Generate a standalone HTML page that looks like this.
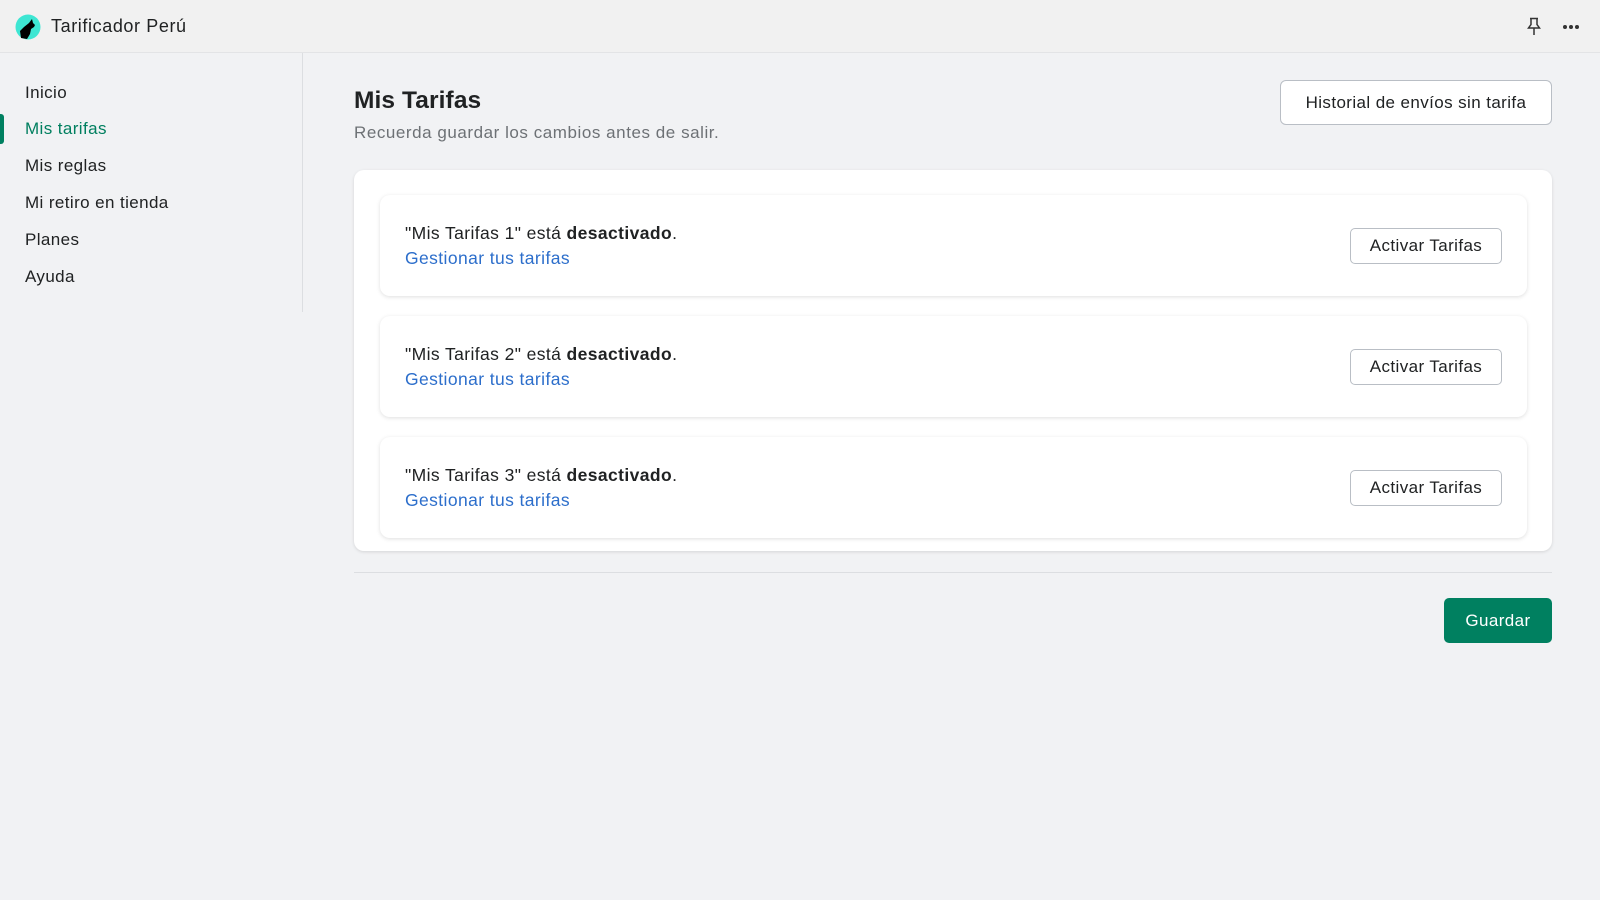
<!DOCTYPE html>
<html><head><meta charset="utf-8"><style>
*{box-sizing:border-box;margin:0;padding:0}
body{width:1600px;height:900px;background:#f1f2f4;font-family:"Liberation Sans",sans-serif;color:#202223;position:relative;overflow:hidden;letter-spacing:.4px}
.abs{position:absolute}
.hdr{left:0;top:0;width:1600px;height:53px;border-bottom:1px solid #e3e4e6;background:#f1f1f1}
.nav{font-size:17px;left:25px}
.btn{position:absolute;background:#fff;border:1.5px solid #b9bec5;border-radius:5px;font-size:17px;display:flex;align-items:center;justify-content:center;color:#202223}
.card{position:absolute;left:380px;width:1147px;height:101px;background:#fff;border-radius:10px;box-shadow:0 1px 4px rgba(0,0,0,.13)}
.l1{position:absolute;left:25px;top:28px;font-size:17.5px}
.l2{position:absolute;left:25px;top:53px;font-size:17.5px;color:#2c6ecb}
.dot{position:absolute;width:4px;height:4px;border-radius:2px;background:#333;top:25px}
</style></head><body>
<div class="abs hdr"></div>
<svg class="abs" style="left:15px;top:14px" width="26" height="26" viewBox="0 0 26 26"><circle cx="13" cy="13" r="12.5" fill="#3ee6d3"/><path d="M6 24 L5 17 L9 13 L14 9 L17 5 L18 9 L20 11 L19 13 L16 15 L15 20 L12 25 Z" fill="#000"/></svg>
<div class="abs" style="left:51px;top:16px;font-size:18px;letter-spacing:.6px">Tarificador Perú</div>
<svg class="abs" style="left:1526px;top:17px" width="16" height="20" viewBox="0 0 16 20" fill="none" stroke="#333" stroke-width="1.5"><path d="M4 1.5h8M5 1.5v6L2.5 11h11L11 7.5v-6M8 11v7"/></svg>
<div class="dot" style="left:1563px"></div><div class="dot" style="left:1569px"></div><div class="dot" style="left:1575px"></div>
<div class="abs" style="left:302px;top:53px;width:1px;height:259px;background:#dcdee1"></div>
<div class="abs" style="left:0;top:114px;width:4px;height:30px;background:#008060;border-radius:0 3px 3px 0"></div>
<div class="abs nav" style="top:83px">Inicio</div>
<div class="abs nav" style="top:119px;color:#007f5f">Mis tarifas</div>
<div class="abs nav" style="top:156px">Mis reglas</div>
<div class="abs nav" style="top:193px">Mi retiro en tienda</div>
<div class="abs nav" style="top:230px">Planes</div>
<div class="abs nav" style="top:267px">Ayuda</div>
<div class="abs" style="left:354px;top:87px;font-size:24.5px;font-weight:bold;letter-spacing:.1px">Mis Tarifas</div>
<div class="abs" style="left:354px;top:123px;font-size:17px;color:#6d7175;letter-spacing:.55px">Recuerda guardar los cambios antes de salir.</div>
<div class="btn" style="left:1280px;top:80px;width:272px;height:45px;border-radius:6px">Historial de envíos sin tarifa</div>
<div class="abs" style="left:354px;top:170px;width:1198px;height:381px;background:#fff;border-radius:10px;box-shadow:0 1px 3px rgba(0,0,0,.12)"></div>
<div class="card" style="top:195px"><div class="l1">"Mis Tarifas 1" está <b>desactivado</b>.</div><div class="l2">Gestionar tus tarifas</div></div>
<div class="card" style="top:316px"><div class="l1">"Mis Tarifas 2" está <b>desactivado</b>.</div><div class="l2">Gestionar tus tarifas</div></div>
<div class="card" style="top:437px"><div class="l1">"Mis Tarifas 3" está <b>desactivado</b>.</div><div class="l2">Gestionar tus tarifas</div></div>
<div class="btn" style="left:1350px;top:228px;width:152px;height:36px">Activar Tarifas</div>
<div class="btn" style="left:1350px;top:349px;width:152px;height:36px">Activar Tarifas</div>
<div class="btn" style="left:1350px;top:470px;width:152px;height:36px">Activar Tarifas</div>
<div class="abs" style="left:354px;top:572px;width:1198px;height:1px;background:#dcdee1"></div>
<div class="btn" style="left:1444px;top:598px;width:108px;height:45px;background:#008060;border:none;color:#fff;border-radius:5px">Guardar</div>
</body></html>
